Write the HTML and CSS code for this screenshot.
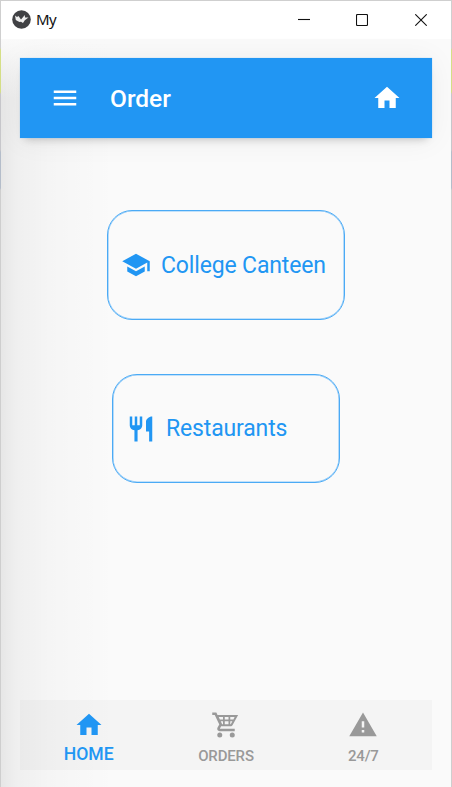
FILE: index.html
```html
<!DOCTYPE html>
<html lang="en">
<head>
<meta charset="utf-8">
<title>My</title>
<link rel="stylesheet" href="styles.css">
</head>
<body>
<div class="window">
  <header class="titlebar">
    <svg class="logo" viewBox="0 0 19 19"><circle cx="9.5" cy="9.5" r="9.3" fill="#404144"/><path d="M3 5.5L5 7 6.5 6 9 9.5 12.8 5 13 7.5 16.5 7.5 12.8 10.2 11 13 9 11.8 7.5 12 5.5 11 3.8 10z" fill="#eee"/></svg>
    <span class="caption">My</span>
    <svg class="control" viewBox="0 0 12 12"><path d="M0 5.5H12"/></svg>
    <svg class="control" viewBox="0 0 12 12"><rect x=".5" y=".5" width="11" height="11" rx="1"/></svg>
    <svg class="control" viewBox="0 0 12 12"><path d="M.3 .3L11.7 11.7M11.7 .3L.3 11.7"/></svg>
  </header>
  <main class="screen">
    <div class="toolbar">
      <svg class="icon" viewBox="0 0 24 24"><path d="M3 6H21V8H3V6M3 11H21V13H3V11M3 16H21V18H3V16Z"/></svg>
      <h1 class="title">Order</h1>
      <svg class="icon" viewBox="0 0 24 24"><path d="M10 20V14H14V20H19V12H22L12 3L2 12H5V20H10Z"/></svg>
    </div>
    <div class="choices">
      <button class="choice canteen">
        <svg class="icon" viewBox="0 0 24 24"><path d="M12 3L1 9L12 15L21 10.09V17H23V9M5 13.18V17.18L12 21L19 17.18V13.18L12 17L5 13.18Z"/></svg>
        <span class="label">College Canteen</span>
      </button>
      <button class="choice restaurants">
        <svg class="icon" viewBox="0 0 24 24"><path d="M11 9H9V2H7V9H5V2H3V9C3 11.12 4.66 12.84 6.75 12.97V22H9.25V12.97C11.34 12.84 13 11.12 13 9V2H11V9M16 6V14H18.5V22H21V2C18.24 2 16 4.24 16 6Z"/></svg>
        <span class="label">Restaurants</span>
      </button>
    </div>
    <nav class="tabs">
      <div class="tab active">
        <svg class="icon" viewBox="0 0 24 24"><path d="M10 20V14H14V20H19V12H22L12 3L2 12H5V20H10Z"/></svg>
        <span class="label">HOME</span>
      </div>
      <div class="tab">
        <svg class="icon" viewBox="0 0 24 24"><path fill-rule="evenodd" d="M1 2V4H3L6.6 11.59L5.25 14.04C4.52 15.37 5.48 17 7 17H19V15H7.42C7.28 15 7.17 14.89 7.17 14.75L8.1 13H15.55C16.3 13 16.96 12.59 17.3 11.97L21.7 4H5.21L4.27 2H1ZM6.2 5.6H9.6V7.5H7.1ZM11 5.6H14V7.5H11ZM15.4 5.6H18.9L17.9 7.5H15.4ZM7.8 8.9H9.6V11.3H8.9ZM11 8.9H14V11.3H11ZM15.4 8.9H17.1L15.8 11.3H15.4Z"/><circle cx="7" cy="20" r="2"/><circle cx="17" cy="20" r="2"/></svg>
        <span class="label">ORDERS</span>
      </div>
      <div class="tab">
        <svg class="icon" viewBox="0 0 24 24"><path d="M13 14H11V9H13M13 18H11V16H13M1 21H23L12 2L1 21Z"/></svg>
        <span class="label">24/7</span>
      </div>
    </nav>
  </main>
</div>
</body>
</html>
```
FILE: styles.css
```css
* { box-sizing: border-box; }
body {
  margin: 0;
  height: 787px;
  padding: 1px 1px 0;
  overflow: hidden;
  font-family: Roboto, sans-serif;
  background: linear-gradient(#cfcfcf 48px, #d5df87 50px 92px, #c7c7cb 94px 150px, #b4bdca 152px 188px, #cecece 190px);
}
.window { height: 786px; display: flex; flex-direction: column; background: #fafafa; }
.titlebar {
  height: 38px;
  flex: none;
  display: flex;
  align-items: center;
  padding: 0 24px 0 11px;
  background: #fff;
}
.logo { width: 19px; height: 19px; margin-top: -2px; }
.caption { flex: 1; margin: -3px 0 0 5px; font: 15px "Noto Sans", sans-serif; letter-spacing: -.5px; color: #111; }
.control { width: 12px; height: 12px; margin-left: 47px; fill: none; stroke: #111; stroke-width: 1.1; }
.caption + .control { margin-left: 0; margin-right: -1px; }
.screen {
  flex: 1;
  display: flex;
  flex-direction: column;
  padding: 19px 19px 17px;
  background:
    linear-gradient(#fafafa, rgba(250,250,250,0) 60px),
    linear-gradient(90deg, rgba(0,0,0,.08), rgba(0,0,0,.045) 15px, rgba(0,0,0,.02) 50px, rgba(0,0,0,.008) 85px, transparent 115px),
    #fafafa;
}
.icon { flex: none; fill: currentColor; }
.toolbar {
  height: 80px;
  display: flex;
  align-items: center;
  padding: 0 30px;
  color: #fff;
  background: #2196f3;
  box-shadow: 0 0 1px #8fc8f6, 0 6px 8px -5px rgba(0,0,0,.22), 0 2px 30px rgba(0,0,0,.06);
}
.toolbar .icon { width: 30px; height: 30px; }
.title { flex: 1; margin: 0 0 0 30px; font-size: 24.5px; font-weight: 500; }
.choices { flex: 1; display: flex; flex-direction: column; align-items: center; padding-top: 72px; gap: 54px; }
.choice {
  height: 109px;
  display: flex;
  align-items: center;
  border: 1px solid #4aaaf5;
  border-radius: 25px;
  box-shadow: inset 0 0 0 .6px #8ac7f9;
  padding: 0 0 0 13px;
  background: transparent;
  color: #2196f3;
  font: 23px Roboto, sans-serif;
}
.choice .icon { width: 30px; height: 30px; margin-right: 10px; }
.choice .label { letter-spacing: -.15px; }
.canteen { width: 238px; height: 110px; }
.restaurants { width: 228px; }
.tabs { height: 70px; display: flex; background: rgba(0,0,0,.025); }
.tab { flex: 1; display: flex; flex-direction: column; align-items: center; padding-top: 10px; color: #999; }
.tab .icon { width: 30px; height: 30px; }
.tab .label { margin-top: 7px; font-size: 15px; line-height: 18px; font-weight: 500; letter-spacing: -.15px; }
.active { color: #2196f3; }
.tab.active .label { margin-top: 5px; font-size: 17.6px; letter-spacing: 0; }
```
